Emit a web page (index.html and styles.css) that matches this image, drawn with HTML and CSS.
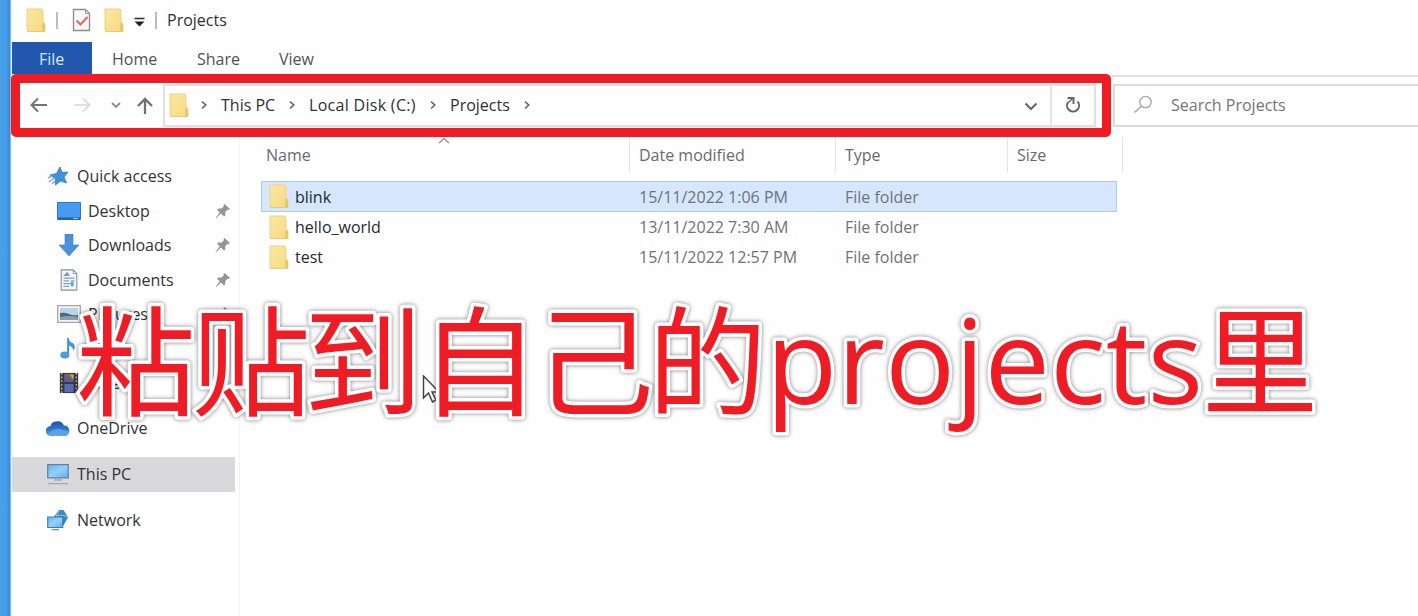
FILE: index.html
```html
<!DOCTYPE html>
<html lang="en">
<head>
<meta charset="utf-8">
<title>Projects</title>
<link rel="stylesheet" href="styles.css">
</head>
<body>
<svg class="defs" width="0" height="0" aria-hidden="true">
  <defs>
    <linearGradient id="fold" x1="0" x2="1" y1="0" y2="1"><stop offset="0" stop-color="#fbe7a1"/><stop offset="1" stop-color="#f5da80"/></linearGradient>
    <linearGradient id="screen" x1="0" x2="1" y1="0" y2="1"><stop offset="0" stop-color="#64b3f3"/><stop offset=".5" stop-color="#94d0fc"/><stop offset="1" stop-color="#5caef0"/></linearGradient>
    <linearGradient id="cloud" x1="0" x2="0" y1="0" y2="1"><stop offset="0" stop-color="#1e58aa"/><stop offset=".5" stop-color="#2f73c8"/><stop offset="1" stop-color="#5ba4e9"/></linearGradient>
    <symbol id="folder" viewBox="0 0 20 25"><path d="M1 1h15l1 2v11l2 2v7.500H3L1 22z" fill="url(#fold)" stroke="#ecd28a" stroke-width="1"/><path d="M16 23v-5l1-4 2 2v7.500z" fill="#e6c865"/><path d="M1 23.500h18" stroke="#e3cb83"/></symbol>
    <symbol id="pin" viewBox="0 0 16 16"><path d="M9.500 1l5.500 5-1.500 1-1-.3-2.300 2.600.2 3-1.400 1.200-3.100-3L1 15.200.700 14.800 4.700 9.200 2 6.700l1.200-1.200 3.400.1L9 3 8.400 2z" fill="#929497"/></symbol>
    <symbol id="chev" viewBox="0 0 8 10"><path d="M2 1.500L5.700 5 2 8.500" fill="none" stroke="#666" stroke-width="1.700"/></symbol>
  </defs>
</svg>
<div class="desktop">
  <div class="window">
    <header class="titlebar">
      <svg class="folder"><use href="#folder"/></svg>
      <span class="bar"></span>
      <svg class="check" viewBox="0 0 19 24"><path d="M1.500 1.500h12l4 4v17h-16z" fill="#f8f8fa" stroke="#8c8c90" stroke-width="1.300"/><path d="M13.500 1.500v4h4" fill="none" stroke="#999"/><path d="M4.500 12.500l4 4 7-7.500" fill="none" stroke="#da7067" stroke-width="2.200"/></svg>
      <svg class="folder"><use href="#folder"/></svg>
      <svg class="menu" viewBox="0 0 11 10"><path d="M.5 1.500h10" stroke="#333" stroke-width="1.600"/><path d="M.5 4.500h10L5.500 9.500z" fill="#222"/></svg>
      <span class="bar"></span>
      <span class="title">Projects</span>
    </header>
    <nav class="tabs"><span class="tab active">File</span><span class="tab">Home</span><span class="tab share">Share</span><span class="tab view">View</span></nav>
    <section class="navigation">
      <div class="address-frame">
        <svg class="back" viewBox="0 0 18 16"><path d="M17 8H2M8 1.500L1.500 8 8 14.500" fill="none" stroke="#737373" stroke-width="2"/></svg>
        <svg class="forward" viewBox="0 0 18 16"><path d="M1 8h15M10 1.500L16.500 8 10 14.500" fill="none" stroke="#d7d7d7" stroke-width="1.700"/></svg>
        <svg class="recent" viewBox="0 0 10 7"><path d="M1 1l4 4 4-4" fill="none" stroke="#8b8b8b" stroke-width="1.900"/></svg>
        <svg class="up" viewBox="0 0 16 18"><path d="M8 17V2M1 9l7-7 7 7" fill="none" stroke="#707070" stroke-width="2.300"/></svg>
        <div class="address">
          <svg class="folder"><use href="#folder"/></svg>
          <svg class="chev first"><use href="#chev"/></svg>
          <span class="crumb pc">This PC</span><svg class="chev"><use href="#chev"/></svg>
          <span class="crumb disk">Local Disk (C:)</span><svg class="chev"><use href="#chev"/></svg>
          <span class="crumb proj">Projects</span><svg class="chev"><use href="#chev"/></svg>
          <svg class="dropdown" viewBox="0 0 14 9"><path d="M1.500 1.500L7 7l5.500-5.500" fill="none" stroke="#666" stroke-width="2.100"/></svg>
          <span class="refresh"><svg viewBox="0 0 16 18"><path d="M12.500 5.500A6 6 0 1 1 3.200 6" fill="none" stroke="#666" stroke-width="2"/><path d="M2.500 2h6v6" fill="none" stroke="#666" stroke-width="2"/><path d="M8 2L3.500 6.500" stroke="#666" stroke-width="1.500"/></svg></span>
        </div>
      </div>
      <div class="search"><svg viewBox="0 0 20 19"><circle cx="12.500" cy="7" r="5.700" fill="none" stroke="#a6a6a6" stroke-width="1.300"/><path d="M8.500 11L1.500 17.500" stroke="#a6a6a6" stroke-width="1.500"/></svg><span>Search Projects</span></div>
    </section>
    <main class="content">
      <aside class="sidebar">
        <div class="item root quick"><svg viewBox="0 0 24 22"><path d="M14 2l2 5.500 6-.5-4 5 2.500 6-6-2-5 4-.3-6.500L4 10l6.500-1.500z" fill="#4093db" stroke="#277cc5" stroke-width=".8"/><path d="M3 17l5-4M2 13l4-2M6 19l3-3" stroke="#8da9bd" stroke-width="1.500"/></svg><span>Quick access</span></div>
        <div class="item"><svg viewBox="0 0 24 22"><path d="M.5 2.500h23v17H.5z" fill="#489af0" stroke="#2a78c7"/><path d="M1 18.500h22" stroke="#175ca9" stroke-width="1.800"/><path d="M16 18.500h5" stroke="#8fc3f4"/></svg><span>Desktop</span><svg class="pin"><use href="#pin"/></svg></div>
        <div class="item"><svg viewBox="0 0 24 22"><path d="M8 0h8v11h6L12 22 2 11h6z" fill="#4c90dc" stroke="#367dca" stroke-width=".6"/></svg><span>Downloads</span><svg class="pin"><use href="#pin"/></svg></div>
        <div class="item"><svg class="doc" viewBox="0 0 24 24"><path d="M3.500 1h13l4 4v18h-17z" fill="#f4f7fa" stroke="#888f96" stroke-width="1.200"/><path d="M16.500 1v4h4" fill="none" stroke="#929ba3"/><path d="M7 7l3-3 2 3zM6 10h12M6 13h6M14 13h4M6 16h8M6 19h6" stroke="#78a4c7" stroke-width="1.300" fill="#3e80b7"/><path d="M14 14h3v5h-3z" fill="#64a3d4"/></svg><span>Documents</span><svg class="pin"><use href="#pin"/></svg></div>
        <div class="item"><svg viewBox="0 0 24 22"><path d="M.7 2.700h22.600v16.600H.7z" fill="#f5f5f5" stroke="#a6a6aa" stroke-width="1.300"/><path d="M3 5h18v12H3z" fill="#b9d4e8"/><path d="M3 10q5-1 9 1t9 1v5H3z" fill="#496b80"/><path d="M3 14q9-2 18 0v3H3z" fill="#8d9faa"/></svg><span>Pictures</span><svg class="pin"><use href="#pin"/></svg></div>
        <div class="item"><svg viewBox="0 0 24 24"><path d="M11 0v17" stroke="#3390df" stroke-width="2"/><path d="M11 0q1 4 6 6 3 4-.5 8 0-5-5.500-6z" fill="#4298e2"/><ellipse cx="7.500" cy="18.500" rx="5" ry="3.800" fill="#4b9be1"/></svg><span>Music</span></div>
        <div class="item"><svg viewBox="0 0 24 24"><path d="M2 1h20v22H2z" fill="#37363b"/><path d="M4 1v22M20 1v22" stroke="#aaa" stroke-width="1.600" stroke-dasharray="2 2"/><path d="M7 2h10v9H7z" fill="#80704a"/><path d="M7 6l4-3 6 8H7z" fill="#655a9c"/><path d="M7 13h10v9H7z" fill="#5869bb"/><path d="M13 3h4v5z" fill="#c4b742"/></svg><span>Videos</span></div>
        <div class="item root onedrive"><svg viewBox="0 0 24 22"><path d="M5 19a5 5 0 0 1-.5-10A6 6 0 0 1 10 4.500a7 7 0 0 1 8 4A5.300 5.300 0 0 1 19 19z" fill="url(#cloud)"/><path d="M2 17q6-6 12-5t9 3q-1 4-4 4H5z" fill="#62aaec" opacity=".7"/></svg><span>OneDrive</span></div>
        <div class="item root selected"><svg viewBox="0 0 24 24"><path d="M.8 1.800h22.400v14.400H.8z" fill="url(#screen)" stroke="#60819c" stroke-width="1.300"/><path d="M8 18.500h8" stroke="#93a3af" stroke-width="1.500"/><path d="M1 22.500h22" stroke="#a7abb0" stroke-width="1.500"/></svg><span>This PC</span></div>
        <div class="item root network"><svg viewBox="0 0 24 24"><path d="M13 1l5 0 5 8-5 9h-6L8 8z" fill="#3c85bf"/><path d="M14 2q-6 5-3 14M10 8q7-3 13 1" fill="none" stroke="#a9d0e9"/><path d="M.8 8.800h16.400v11.400H.8z" fill="url(#screen)" stroke="#45799e" stroke-width="1.200"/><path d="M5 22.500h8" stroke="#8295a4" stroke-width="1.500"/></svg><span>Network</span></div>
      </aside>
      <section class="files">
        <svg class="sort" viewBox="0 0 12 7"><path d="M1 6l5-4.500L11 6" fill="none" stroke="#999" stroke-width="1.500"/></svg>
        <div class="row head"><span>Name</span><span>Date modified</span><span>Type</span><span>Size</span></div>
        <div class="row chosen"><span class="name"><svg class="folder"><use href="#folder"/></svg>blink</span><span>15/11/2022 1:06 PM</span><span>File folder</span><span></span></div>
        <div class="row"><span class="name"><svg class="folder"><use href="#folder"/></svg>hello_world</span><span>13/11/2022 7:30 AM</span><span>File folder</span><span></span></div>
        <div class="row"><span class="name"><svg class="folder"><use href="#folder"/></svg>test</span><span>15/11/2022 12:57 PM</span><span>File folder</span><span></span></div>
      </section>
    </main>
  </div>
  <svg class="cursor" viewBox="0 0 18 28"><path d="M1.500 1v22l5-5 4 9 3.500-2-4-8h7z" fill="#fff" stroke="#444" stroke-width="1.500"/></svg>
  <svg class="caption" viewBox="0 0 1418 616"><text class="cjk" x="76.500 191.500 303.500 420 535 648" y="407">粘贴到自己的</text><text class="latin" x="766" y="403.500" textLength="437" lengthAdjust="spacingAndGlyphs">projects</text><text class="cjk last" x="1202" y="404.500">里</text></svg>
</div>
</body>
</html>
```
FILE: styles.css
```css
* { box-sizing: border-box; }
body { margin: 0; background: #fefefe; font: 16px/24px "Open Sans", "Noto Sans", sans-serif; color: #303030; }
svg { display: block; flex: none; }
.defs { position: absolute; }
.desktop { position: relative; width: 1418px; height: 616px; overflow: hidden; padding-left: 12px; background: linear-gradient(90deg, #4aa0ea 0, #459be7 7px, #3887cd 10px, #d9f4ff 11px, #fefefe 13px); }
.window { height: 616px; background: #fefefe; }
.folder { width: 20px; height: 25px; }
.titlebar { height: 42px; display: flex; align-items: center; padding: 0 0 2px 14px; }
.bar { width: 2px; height: 17px; background: #bdbdbd; }
.titlebar .bar { margin-left: 10px; }
.check { width: 19px; height: 24px; margin: 0 13px 0 14px; }
.titlebar .menu { width: 11px; height: 10px; margin: 3px 0 0 10px; }
.title { margin-left: 10px; }
.tabs { display: flex; height: 32px; line-height: 34px; color: #515151; }
.tab { width: 82px; padding-left: 20px; }
.tab.active { width: 80px; padding-left: 27px; background: #2158ae; color: #d7e9ff; font-weight: 500; }
.tab.share { padding-left: 23px; }
.tab.view { padding-left: 23px; }
.navigation { height: 63px; display: flex; margin-left: -1px; background: linear-gradient(#fefefe 1px, #e1e1e1 1px, #e1e1e1 3px, #fefefe 3px); }
.address-frame { width: 1100px; height: 63px; border: 9px solid #ee1c24; border-radius: 5px; background: #fefefe; display: flex; align-items: center; padding-bottom: 1px; }
.back { width: 18px; height: 16px; margin-left: 10px; }
.forward { width: 18px; height: 16px; margin-left: 25px; }
.recent { width: 10px; height: 7px; margin-left: 20px; }
.up { width: 16px; height: 18px; margin: 2px 0 0 16px; }
.address { width: 933px; height: 43px; margin-left: 10px; border: 2px solid #e0e0e0; display: flex; align-items: center; padding-left: 4px; }
.chev { width: 8px; height: 10px; }
.chev.first { margin: 0 13px 0 11px; }
.crumb { white-space: nowrap; }
.pc { width: 67px; }
.disk { width: 120px; margin-left: 13px; letter-spacing: .3px; }
.proj { width: 73px; margin-left: 13px; }
.dropdown { width: 14px; height: 9px; margin: 2px 12px 0 auto; }
.refresh { width: 44px; height: 39px; border-left: 2px solid #e4e4e4; display: grid; place-items: center; }
.refresh svg { width: 16px; height: 18px; }
.search { flex: 1; height: 43px; margin: 10px 0 0 2px; border: 2px solid #dcdcdc; border-right: 0; display: flex; align-items: center; padding: 0 0 2px 18px; color: #757575; background: #fefefe; }
.search svg { width: 20px; height: 19px; margin-right: 18px; }
.content { display: flex; height: 479px; }
.sidebar { width: 228px; border-right: 1px solid #f3f3f5; padding-top: 22px; }
.item { display: flex; align-items: center; height: 34.500px; width: 223px; padding-left: 45px; color: #333; }
.item > svg:first-child { width: 24px; height: 22px; margin-right: 7px; }
.item.root { padding-left: 34px; }
.item.root > svg:first-child { width: 24px; }
.item .pin { width: 16px; height: 16px; margin: 0 4px 0 auto; }
.item.onedrive { margin-top: 10px; }
.item.selected { margin-top: 12px; background: #d9d8da; }
.item.network { margin-top: 11.500px; }
.files { flex: 1; position: relative; }
.sort { position: absolute; left: 198px; top: 0; width: 12px; height: 7px; }
.row { width: 856px; height: 30px; margin-left: 21px; display: grid; grid-template-columns: 368px 206px 172px 110px; align-items: center; color: #707277; }
.row > span:not(:first-child) { padding-left: 10px; }
.row.head { width: 862px; grid-template-columns: 369px 206px 172px 115px; height: 36px; margin-bottom: 8px; color: #686a72; }
.row.head > span:not(:first-child) { padding-left: 9px; }
.head > span { height: 36px; line-height: 36px; border-right: 1px solid #e4e4e7; }
.head > span:first-child { padding-left: 5px; }
.row.chosen { height: 31px; margin-bottom: 0; background: #d6e6fd; border: 1px solid #abcbea; grid-template-columns: 367px 206px 172px 109px; }
.name { display: flex; align-items: center; color: #252a31; padding-left: 8px; gap: 6px; }
.chosen .name { padding-left: 7px; }
.cursor { position: absolute; left: 422px; top: 375px; width: 18px; height: 28px; }
.caption { position: absolute; left: 0; top: 0; width: 1418px; height: 616px; filter: drop-shadow(0 0 2px rgba(0, 0, 0, .5)); }
.caption text { fill: #ee1c24; stroke: #fff; stroke-width: 7px; stroke-linejoin: round; paint-order: stroke; }
.cjk { font: 400 119px "Noto Sans CJK SC", sans-serif; }
.cjk.last { font-size: 116px; }
.latin { font: 500 118px "Open Sans", sans-serif; }
```
